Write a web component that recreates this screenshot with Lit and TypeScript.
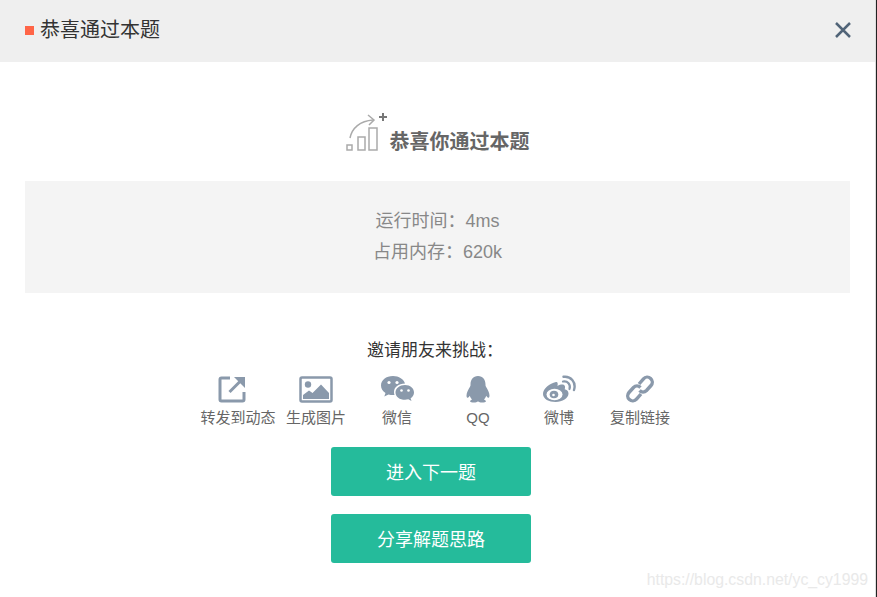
import {LitElement, html, css} from 'lit';
import {customElement} from 'lit/decorators.js';

const shareIcons = {
  forward: html`<svg viewBox="0 0 28 28" width="28" height="28">
    <path d="M12 3H3.500A1.500 1.500 0 0 0 2 4.500V24.500A1.500 1.500 0 0 0 3.500 26H24.500A1.500 1.500 0 0 0 26 24.500V17" fill="none" stroke="currentColor" stroke-width="3"/>
    <path d="M11.500 17L23 5.500" fill="none" stroke="currentColor" stroke-width="3"/>
    <path d="M16 2H27V13Z" fill="currentColor"/>
  </svg>`,
  image: html`<svg viewBox="0 0 34 28" width="34" height="28">
    <rect x="1.500" y="2.500" width="31" height="24" rx="1.500" fill="none" stroke="currentColor" stroke-width="2.500"/>
    <circle cx="9" cy="9.500" r="3.200" fill="currentColor"/>
    <path d="M4 24V20L10 15.500L13.500 18L22 9.500L30 18V24Z" fill="currentColor"/>
  </svg>`,
  wechat: html`<svg viewBox="0 0 34 28" width="34" height="28">
    <path d="M13 1C6 1 1 5.200 1 10.500C1 13.600 2.700 16.100 5.500 18L4.300 21.500L8.500 19.400C10 19.800 11.400 20 13 20L14.500 20C14.100 18.900 14 17.900 14 17C14 12.100 18.500 8.500 25 8.500C23.800 4.200 18.900 1 13 1Z" fill="currentColor"/>
    <circle cx="9" cy="7.500" r="1.600" fill="#fff"/>
    <circle cx="17" cy="7.500" r="1.600" fill="#fff"/>
    <path d="M25 10C19.700 10 15.500 13.300 15.500 17.400C15.500 21.500 19.700 24.800 25 24.800C26.200 24.800 27.200 24.600 28.300 24.300L31.500 26L30.600 23.200C32.700 21.800 34 19.700 34 17.400C34 13.300 30.300 10 25 10Z" fill="currentColor"/>
    <circle cx="21.500" cy="15.500" r="1.300" fill="#fff"/>
    <circle cx="28.500" cy="15.500" r="1.300" fill="#fff"/>
  </svg>`,
  qq: html`<svg viewBox="0 0 26 28" width="26" height="28">
    <path d="M13 1C8 1 5.500 4.800 5.500 9.500C5.500 10.300 5.500 11 5 11.800C3.500 14.300 1.500 17.500 1.500 20.500C1.500 22 2 22.800 2.600 22.800C3.300 22.800 4.200 21.800 4.700 20.800C5.200 22.300 6 23.500 7 24.400C5.700 25 5 25.700 5 26.300C5 27.300 7 27.500 9 27.500C10.800 27.500 12 27 13 26.500C14 27 15.200 27.500 17 27.500C19 27.500 21 27.300 21 26.300C21 25.700 20.300 25 19 24.400C20 23.500 20.800 22.300 21.300 20.800C21.800 21.800 22.700 22.800 23.400 22.800C24 22.800 24.500 22 24.500 20.500C24.500 17.500 22.500 14.300 21 11.800C20.500 11 20.500 10.300 20.500 9.500C20.500 4.800 18 1 13 1Z" fill="currentColor"/>
  </svg>`,
  weibo: html`<svg viewBox="0 0 34 28" width="34" height="28">
    <path d="M14 7C7.500 8.300 1 13.500 1 19C1 24 7 27 13.500 27C20.500 27 26.500 23 26.500 18.500C26.500 16 24.500 14.800 22.700 14.300C23.300 12.500 23.300 10.800 22 10C20.500 9.200 17.800 9.700 15.500 11C16 8.500 15.800 6.700 14 7Z" fill="currentColor"/>
    <ellipse cx="12.500" cy="19.500" rx="8" ry="5.800" fill="#fff"/>
    <ellipse cx="12" cy="19.500" rx="4.300" ry="3.800" fill="currentColor"/>
    <circle cx="11.500" cy="20" r="1.300" fill="#fff"/>
    <path d="M21 6.500C25.500 5.500 29 9.500 27.500 14" fill="none" stroke="currentColor" stroke-width="2.200" stroke-linecap="round"/>
    <path d="M21.500 1.800C28.500 0.800 34.500 7 32 15" fill="none" stroke="currentColor" stroke-width="2.400" stroke-linecap="round"/>
  </svg>`,
  link: html`<svg viewBox="0 0 28 28" width="28" height="28" fill="none" stroke="currentColor" stroke-width="3.400">
    <path d="M13 9L17.500 3.800A5 5 0 0 1 25 10.500L20.500 15.500A5 5 0 0 1 13.500 15.500"/>
    <path d="M15 19L10.500 24.200A5 5 0 0 1 3 17.500L7.500 12.500A5 5 0 0 1 14.500 12.500"/>
  </svg>`,
};

const shares = [
  {label: '转发到动态', icon: shareIcons.forward, first: true},
  {label: '生成图片', icon: shareIcons.image},
  {label: '微信', icon: shareIcons.wechat},
  {label: 'QQ', icon: shareIcons.qq},
  {label: '微博', icon: shareIcons.weibo},
  {label: '复制链接', icon: shareIcons.link},
];

@customElement('app-root')
export class AppRoot extends LitElement {
  static styles = css`
    :host {
      display: block;
      position: relative;
      height: 597px;
      overflow: hidden;
      background: #fff;
      font-family: 'Liberation Sans', 'Noto Sans CJK SC', sans-serif;
    }

    .header {
      display: flex;
      align-items: center;
      justify-content: space-between;
      height: 62px;
      padding: 0 25px 2px;
      box-sizing: border-box;
      background: #efefef;
      color: #333;
    }

    .title {
      display: flex;
      align-items: center;
      gap: 6px;
      font-size: 20px;
      line-height: 24px;
    }

    .square {
      width: 9px;
      height: 9px;
      background: #ff6547;
    }

    .close {
      display: block;
      margin-right: 1px;
      color: #516478;
    }

    .result-head {
      display: flex;
      align-items: flex-end;
      justify-content: center;
      height: 119px;
      padding: 0 2px 27px 0;
      box-sizing: border-box;
      color: #666;
    }

    .result-head svg {
      display: block;
      margin-bottom: 2px;
    }

    .result-head h2 {
      margin: 0;
      font-size: 20px;
      line-height: 24px;
      font-weight: 700;
    }

    .stats {
      margin: 0 27px 0 25px;
      padding: 25px 0;
      background: #f4f4f4;
      color: #888;
      font-size: 18px;
      line-height: 31px;
      text-align: center;
    }

    .invite {
      margin-top: 46px;
      padding-right: 7px;
      color: #333;
      font-size: 17px;
      line-height: 24px;
      text-align: center;
    }

    .shares {
      display: flex;
      justify-content: center;
      margin-top: 12px;
      padding-left: 1px;
    }

    .share {
      display: flex;
      flex-direction: column;
      align-items: center;
      width: 81px;
      color: #666;
      font-size: 15px;
      line-height: 20px;
      white-space: nowrap;
    }

    .share.first {
      margin-right: -3px;
    }

    .share-icon {
      display: flex;
      align-items: center;
      justify-content: center;
      height: 28px;
      margin-bottom: 5px;
      color: #8a99ab;
    }

    .share.first .share-icon {
      margin-right: 12px;
    }

    .share-icon svg {
      display: block;
    }

    .actions {
      display: flex;
      flex-direction: column;
      align-items: center;
      gap: 18px;
      margin-top: 19px;
      padding-right: 15px;
    }

    .btn {
      width: 200px;
      height: 49px;
      padding: 0 0 2px;
      border: 0;
      border-radius: 3px;
      background: #25bb9b;
      color: #fff;
      font-family: inherit;
      font-size: 18px;
    }

    .edge {
      position: absolute;
      top: 0;
      right: 0;
      bottom: 0;
      width: 1px;
      background: #222;
      box-shadow: -1px 0 0 #ddd;
    }

    .watermark {
      position: absolute;
      right: 9px;
      bottom: 7px;
      color: #e9e9e9;
      font-size: 15.800px;
      line-height: 20px;
    }
  `;

  render() {
    return html`
      <div class="header">
        <div class="title"><span class="square"></span>恭喜通过本题</div>
        <svg class="close" viewBox="0 0 16 16" width="16" height="16" fill="none" stroke="currentColor" stroke-width="2.500">
          <path d="M1 1L15 15M15 1L1 15"/>
        </svg>
      </div>

      <div class="result-head">
        <svg viewBox="0 0 44 40" width="44" height="40" fill="none" stroke="#aaa" stroke-width="1.500">
          <rect x="1" y="33" width="5" height="5"/>
          <rect x="12" y="25" width="7" height="13"/>
          <rect x="23" y="16" width="8" height="22"/>
          <path d="M4 26C6 16 14 9 27 8"/>
          <path d="M22 3L28 8L23 13"/>
          <path d="M33 5H41M37 1V9" stroke="#777" stroke-width="2"/>
        </svg>
        <h2>恭喜你通过本题</h2>
      </div>

      <div class="stats">
        <div>运行时间&#xFF1A;4ms</div>
        <div>占用内存&#xFF1A;620k</div>
      </div>

      <div class="invite">邀请朋友来挑战&#xFF1A;</div>

      <div class="shares">
        ${shares.map(
          (s) => html`
            <div class="share ${s.first ? 'first' : ''}">
              <div class="share-icon">${s.icon}</div>
              ${s.label}
            </div>
          `
        )}
      </div>

      <div class="actions">
        <button class="btn">进入下一题</button>
        <button class="btn">分享解题思路</button>
      </div>

      <div class="edge"></div>
      <div class="watermark">https://blog.csdn.net/yc_cy1999</div>
    `;
  }
}
